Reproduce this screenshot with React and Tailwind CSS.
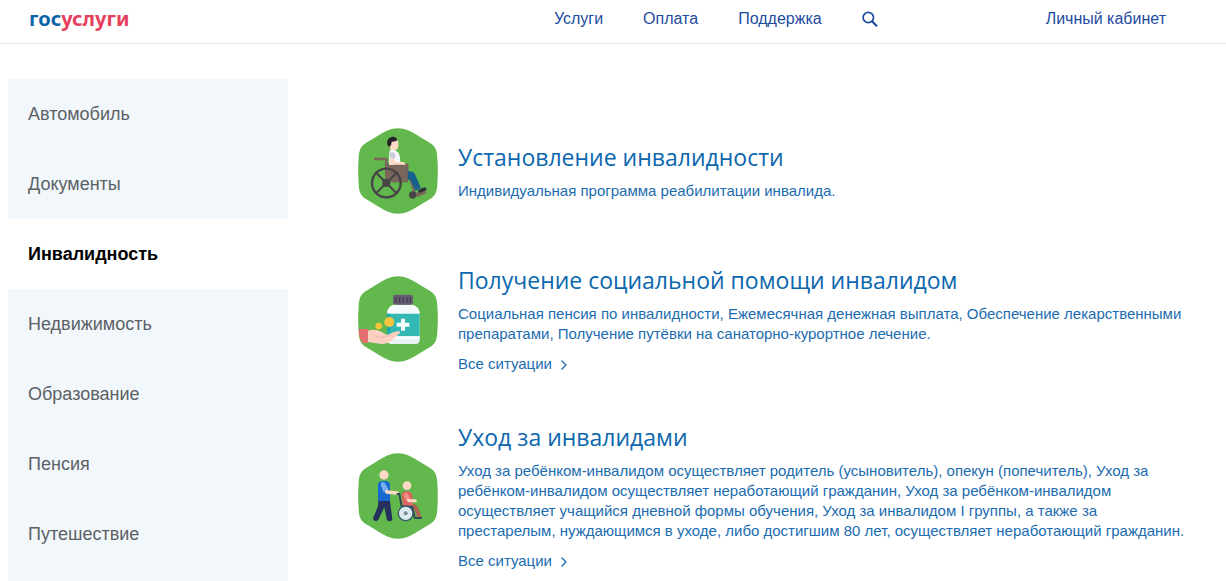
import { ChevronRight } from 'lucide-react';

const menu = ['Автомобиль', 'Документы', 'Инвалидность', 'Недвижимость', 'Образование', 'Пенсия', 'Путешествие'];

const Badge = ({ children }) => (
    <svg viewBox="0 0 240 276" className="w-20 h-[92px] shrink-0" aria-hidden="true">
        <path
            d="M120 10C142 10 160 20 173 28L215 53C234 65 237 78 238 100Q241 138 238 176C237 198 234 211 215 223L173 248C160 256 142 266 120 266C98 266 80 256 67 248L25 223C6 211 3 198 2 176Q-1 138 2 100C3 78 6 65 25 53L67 28C80 20 98 10 120 10Z"
            fill="#62b84c"
        />
        {children}
    </svg>
);

const WheelchairIcon = () => (
    <Badge>
        <g transform="translate(-24 -16)">
            {/* Chair */}
            <path d="M72 118H109V136" fill="none" stroke="#7b665c" strokeWidth="8" />
            <path d="M104 135H172V177H181L194 222" fill="none" stroke="#7b665c" strokeWidth="7" />
            <path d="M105 135H174V188H105Z" fill="#7b665c" />
            <path d="M186 222L225 213Q231 215 229 220L203 232Z" fill="#7b665c" />
            {/* Person */}
            <path d="M173 155Q190 153 195 164L213 205L196 213L181 180H173Z" fill="#17618c" />
            <path d="M203 212L223 203Q230 205 230 211L208 220Z" fill="#2c2e38" />
            <path d="M118 76L124 62H144Q147 76 144 86Q142 90 137 90V98H121V84Z" fill="#fddac5" />
            <path d="M115 80Q108 69 114 59Q120 50 130 51Q140 52 142 62Q134 67 125 66Q125 75 119 81Z" fill="#27232a" />
            <path d="M121 91Q132 87 146 99Q151 111 151 127L127 136H117L118 98Z" fill="#f5f6fb" />
            <path d="M119 100Q130 91 136 106L134 118L121 115Z" fill="#c9cbd6" />
            <path d="M122 115L133 118L136 127H160Q166 129 167 135H117Z" fill="#fddac5" />
            {/* Wheels */}
            <circle cx="109" cy="190" r="43" fill="none" stroke="#464446" strokeWidth="7" />
            <path d="M79 160L139 220M139 160L79 220" stroke="#464446" strokeWidth="6" />
            <circle cx="109" cy="190" r="12" fill="#464446" />
            <circle cx="188" cy="226" r="11" fill="#464446" />
        </g>
    </Badge>
);

const MedicineIcon = () => (
    <Badge>
        <g transform="translate(-24 -7)">
            <path d="M131 102H188Q209 108 209 129V205Q209 220 195 220H126Q111 220 111 205V129Q111 108 131 102Z" fill="#f5fafc" />
            <path d="M111 129H209V197H111Z" fill="#33b8b3" />
            <path d="M111 129H120V197H111Z" fill="#1fa9a8" />
            <path d="M120 197H209V204Q209 220 194 220H130Q120 215 120 197Z" fill="#e9f1f4" />
            <path d="M125 198H205V205H125Z" fill="#f9fcfd" />
            <rect x="129" y="72" width="60" height="30" rx="6" fill="#655e73" />
            <path d="M138 79V96M149 79V96M160 79V96M171 79V96M181 79V96" stroke="#423d50" strokeWidth="4" />
            <path d="M153 144H165V156H178V168H165V180H153V168H140V156H153Z" fill="#f8fcfd" />
            {/* Coins and hand */}
            <circle cx="118" cy="154" r="15" fill="#fac43c" />
            <circle cx="86" cy="166" r="10" fill="#fac43c" />
            <path d="M54 180Q75 174 94 183L109 192Q119 190 126 186L145 181Q152 182 149 188L124 210Q110 222 94 220L54 214Z" fill="#fdd0c4" />
            <path d="M71 195Q89 203 105 199L122 192" fill="none" stroke="#eeb3a8" strokeWidth="3" />
            <path d="M26 175H54V217H39Q29 208 27 190Z" fill="#e56f70" />
        </g>
    </Badge>
);

const CareIcon = () => (
    <Badge>
        <g transform="translate(-24 -14)">
            {/* Helper */}
            <circle cx="102" cy="89" r="14" fill="#fddac5" />
            <path d="M85 166H120L127 222Q126 229 117 228L111 225L103 186L85 223Q80 230 71 225L69 219L84 183Z" fill="#25305f" />
            <path d="M84 117Q86 108 97 107H109Q120 109 120 120V167H84Z" fill="#1768cf" />
            <path d="M106 129L111 140L141 143" fill="none" stroke="#fddac5" strokeWidth="11" strokeLinecap="round" strokeLinejoin="round" />
            <path d="M93 112Q104 106 108 118L114 132L101 141L93 121Z" fill="#75aef2" />
            {/* Chair and passenger */}
            <path d="M188 178L199 190L209 216" fill="none" stroke="#ae654d" strokeWidth="12" />
            <path d="M155 147Q157 138 169 138H177Q187 142 188 160V187H160Z" fill="#df655f" />
            <path d="M168 150L176 166H196" fill="none" stroke="#fddac5" strokeWidth="9" strokeLinecap="round" strokeLinejoin="round" />
            <path d="M164 143Q173 139 176 151L179 160L168 163L161 151Z" fill="#f59189" />
            <circle cx="171" cy="121" r="13" fill="#fddac5" />
            <path d="M140 146H148L155 184H187L194 218H216" fill="none" stroke="#34485a" strokeWidth="6" strokeLinejoin="round" />
            <circle cx="167" cy="204" r="22" fill="#dce9ee" stroke="#34566b" strokeWidth="4" />
            <circle cx="167" cy="204" r="6" fill="#7b8a93" />
        </g>
    </Badge>
);

const situations = [
    {
        title: 'Установление инвалидности',
        Icon: WheelchairIcon,
        links: ['Индивидуальная программа реабилитации инвалида'],
    },
    {
        title: 'Получение социальной помощи инвалидом',
        Icon: MedicineIcon,
        links: [
            'Социальная пенсия по инвалидности',
            'Ежемесячная денежная выплата',
            'Обеспечение лекарственными препаратами',
            'Получение путёвки на санаторно-курортное лечение',
        ],
        more: true,
    },
    {
        title: 'Уход за инвалидами',
        Icon: CareIcon,
        links: [
            'Уход за ребёнком-инвалидом осуществляет родитель (усыновитель), опекун (попечитель)',
            'Уход за ребёнком-инвалидом осуществляет неработающий гражданин',
            'Уход за ребёнком-инвалидом осуществляет учащийся дневной формы обучения',
            'Уход за инвалидом I группы, а также за престарелым, нуждающимся в уходе, либо достигшим 80 лет, осуществляет неработающий гражданин',
        ],
        more: true,
    },
];

const Header = () => (
    <header className="flex items-center h-11 pl-[29px] pr-[60px] pb-2 pt-0.5 border-b border-[#e8e8e8] text-base text-[#1d4b9f]">
        <a href="#" className="font-['Noto_Sans',sans-serif] text-xl leading-6 font-bold text-[#0b63a8]">
            гос<span className="text-[#e5405c]">услуги</span>
        </a>
        <nav className="flex items-center gap-10 ml-auto mr-[168px]">
            <a href="#">Услуги</a>
            <a href="#">Оплата</a>
            <a href="#">Поддержка</a>
            <button type="button" aria-label="Поиск">
                <svg viewBox="0 0 16 16" className="w-4 h-4" fill="none" stroke="currentColor">
                    <circle cx="6.3" cy="6.5" r="5.2" strokeWidth="1.7" />
                    <path d="M10 10.3L15 15.2" strokeWidth="2.2" />
                </svg>
            </button>
        </nav>
        <a href="#">Личный кабинет</a>
    </header>
);

const Situation = ({ title, Icon, links, more }) => (
    <article className="flex items-center gap-5">
        <Icon />
        <div className="text-[15px] leading-5 text-[#1b6cb0]">
            <h2 className="font-['Open_Sans','Noto_Sans',sans-serif] text-[23px] leading-8 text-[#0b67ae]">
                <a href="#">{title}</a>
            </h2>
            <p className="mt-2">
                {links.map((link, i) => (
                    <span key={link}>
                        <a href="#">{link}</a>
                        {i < links.length - 1 ? ', ' : '.'}
                    </span>
                ))}
            </p>
            {more && (
                <a href="#" className="flex items-center gap-1 mt-[10px]">
                    Все ситуации
                    <ChevronRight size={16} strokeWidth={2} className="mt-0.5" />
                </a>
            )}
        </div>
    </article>
);

const App = () => (
    <div className="min-h-screen flex flex-col bg-white font-['Liberation_Sans',Arial,sans-serif]">
        <Header />
        <div className="flex flex-1 pt-[35px] pl-2">
            <nav className="w-[280px] shrink-0 bg-[#f2f7fc] text-lg leading-[30px]">
                {menu.map((item) => (
                    <a
                        key={item}
                        href="#"
                        className={`block px-5 py-5 ${item === 'Инвалидность' ? 'bg-white font-bold text-black' : 'text-[#5b6165]'}`}
                    >
                        {item}
                    </a>
                ))}
            </nav>
            <main className="flex flex-col gap-[47px] flex-1 pt-[46px] pl-[70px] pr-9">
                {situations.map((s) => (
                    <Situation key={s.title} {...s} />
                ))}
            </main>
        </div>
    </div>
);

export default App;
